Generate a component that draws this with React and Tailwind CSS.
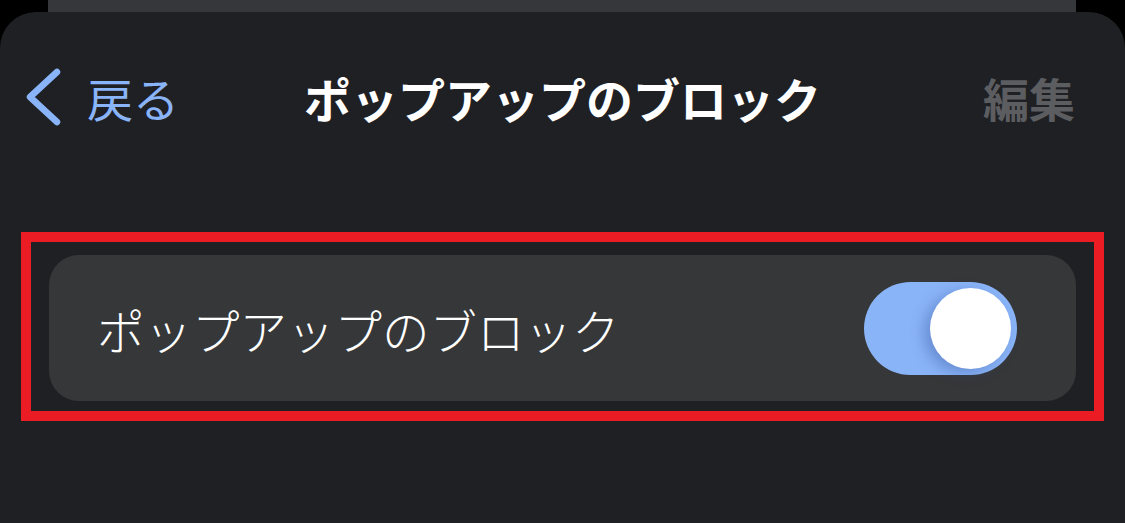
import React from "react";

const jp = { fontFamily: '"Noto Sans CJK JP", "Noto Sans", sans-serif' };

function BackChevron() {
  return (
    <svg width="36" height="58" viewBox="0 0 36 58" fill="none">
      <path
        d="M32 4 L5 29 L32 54"
        stroke="#8ab4f8"
        strokeWidth="6.5"
        strokeLinecap="round"
        strokeLinejoin="round"
      />
    </svg>
  );
}

function Toggle() {
  return (
    <div className="w-[153px] h-[93px] rounded-full bg-[#8ab4f8] flex items-center justify-end pr-[6px]">
      <div className="w-[81px] h-[81px] rounded-full bg-white shadow-[-6px_4px_14px_rgba(40,70,140,0.35)]" />
    </div>
  );
}

export default function App() {
  return (
    <div className="w-[1125px] h-[523px] bg-black flex flex-col overflow-hidden" style={jp}>
      <div className="h-[12px] ml-[48px] mr-[49px] bg-[#36373b] shrink-0" />
      <div className="flex-1 bg-[#1f2023] rounded-t-[36px] flex flex-col">
        <div className="h-[170px] grid grid-cols-[1fr_auto_1fr] items-center">
          <div className="flex items-center pl-[25px] gap-[26px]">
            <BackChevron />
            <span className="text-[46px] font-normal text-[#8ab4f8] leading-none">戻る</span>
          </div>
          <div className="text-[47px] font-bold text-white leading-none">ポップアップのブロック</div>
          <div className="flex justify-end pr-[50px]">
            <span className="text-[46px] font-bold text-[#5c5d60] leading-none">編集</span>
          </div>
        </div>
        <div className="mt-[50px] ml-[21px] w-[1083px] border-[10px] border-[#ec1c24] pt-[13px] pb-[10px] px-[18px]">
          <div className="h-[146px] rounded-[30px] bg-[#363739] flex items-center justify-between pl-[48px] pr-[59px]">
            <span className="text-[47.5px] font-light text-white leading-none pt-[3px]">ポップアップのブロック</span>
            <Toggle />
          </div>
        </div>
      </div>
    </div>
  );
}
